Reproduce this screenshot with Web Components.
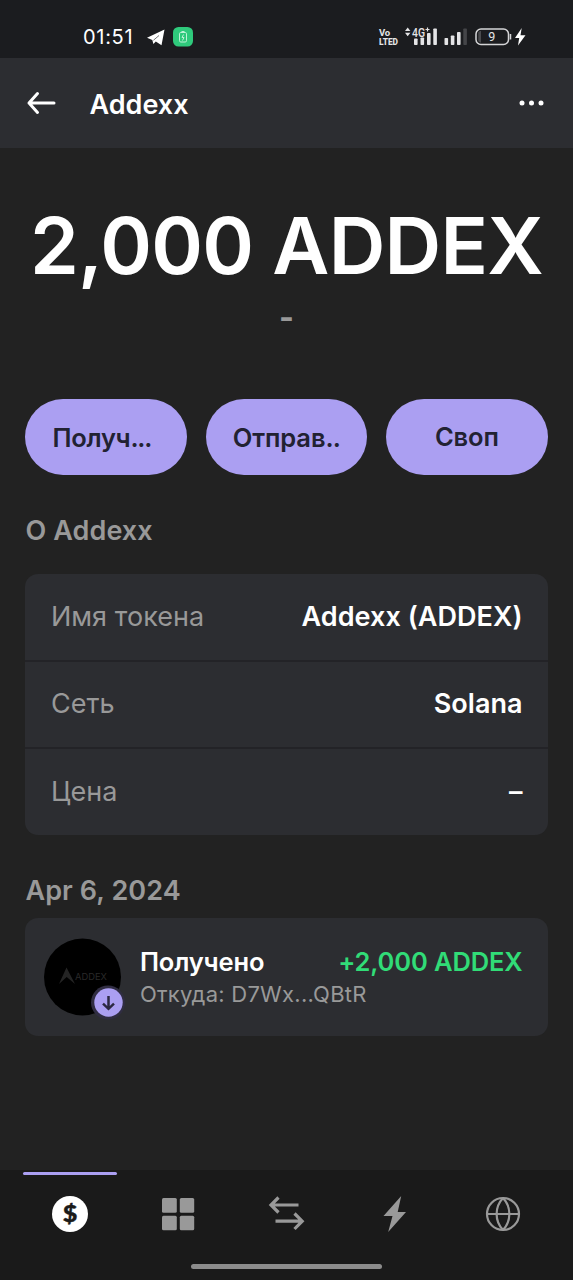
<!DOCTYPE html>
<html lang="ru"><head><meta charset="utf-8"><title>Addexx</title>
<style>
body{margin:0;background:#222;font-family:Inter,"Noto Sans",sans-serif;color:#fff}
</style></head><body>
<wallet-app></wallet-app>
<script>
const define=(name,html)=>{
  const t=document.createElement('template');t.innerHTML=html;
  customElements.define(name,class extends HTMLElement{
    constructor(){super();this.attachShadow({mode:'open'}).append(t.content.cloneNode(true));}
  });
};

define('status-bar',`<style>
:host{display:flex;height:58px;background:#1b1c1f;box-sizing:border-box;padding:15px 45px 0 83px;align-items:center}
.time{font:400 20px/24px Inter,sans-serif;letter-spacing:.7px;width:64px;white-space:nowrap}
svg{display:block}.right{margin-left:auto}
text{font-family:Roboto,sans-serif;fill:#e4e4e6}
</style>
<span class="time">01:51</span>
<svg width="48" height="24" viewBox="147 25 48 24"><path d="M147 37.800L164.500 29.500L161.500 45.200L155.800 41.500L153.400 44L152.300 39.900Z" fill="#fff"/><path d="M153.400 40.300L159 35.500" fill="none" stroke="#1b1c1f" stroke-width=".6"/>
<rect x="173" y="27" width="20" height="19.500" rx="5.500" fill="#2fca7c"/><rect x="179.500" y="32.500" width="7" height="9.500" rx="1.300" fill="none" stroke="#bdf2d6"/><path d="M181.500 31.500h3M183.500 34.500l-1.500 3h2l-1.500 3" fill="none" stroke="#bdf2d6" stroke-width="1"/></svg>
<svg class="right" width="150" height="24" viewBox="378 25 150 24">
<text x="379" y="36" font-size="9.500" font-weight="700" textLength="11">Vo</text><text x="379" y="44.700" font-size="8.800" font-weight="800" textLength="19" lengthAdjust="spacingAndGlyphs">LTED</text>
<path d="M405 31l2.700-3.500 2.700 3.500zM405 32.700l2.700 3.500 2.700-3.500z" fill="#e4e4e6"/>
<g fill="#e4e4e6"><rect x="414" y="38.500" width="3.600" height="6.500" rx=".8"/><rect x="420.500" y="37.500" width="3.600" height="7.500" rx=".8"/><rect x="427" y="33" width="3.600" height="12" rx=".8"/><rect x="433.300" y="28.500" width="3.600" height="16.500" rx=".8"/>
<rect x="444.500" y="38" width="3.600" height="7" rx=".8"/><rect x="450.800" y="35.500" width="3.600" height="9.500" rx=".8"/><rect x="457" y="32" width="3.600" height="13" rx=".8"/><rect x="463.300" y="28.500" width="3.600" height="16.500" rx=".8" fill="#444548"/></g>
<text x="412" y="36.500" font-size="12" font-weight="500" textLength="13" lengthAdjust="spacingAndGlyphs">4G</text><path d="M425.500 29.500h4M427.500 27.500v4" stroke="#e4e4e6" stroke-width="1.200"/>
<rect x="476" y="29" width="32.500" height="15.500" rx="5" fill="none" stroke="#d5d5d7" stroke-width="1.500"/><path d="M478.300 32.500q.3-1.300 2.700-1.700v12q-2.400-.4-2.700-1.700z" fill="#4a4b4e"/><path d="M510.500 34v5.500" stroke="#d5d5d7" stroke-width="1.500"/>
<text x="488.300" y="41.300" font-size="12.500">9</text>
<path d="M521.700 28L515 38h4.200L518 45.500L525.500 35.300H520.500Z" fill="#fff"/></svg>`);

define('app-header',`<style>
:host{display:flex;align-items:center;height:90px;background:#2c2d31;box-sizing:border-box;padding:0 28px 0 26px}
.t{font-size:27px;line-height:32px;font-weight:600;margin-left:32.500px;padding-top:3px;flex:1}svg{display:block}
</style>
<svg width="31" height="24" viewBox="0 0 31 24"><path d="M11.500 2.500L3 12L11.500 21.500M3 12H28" fill="none" stroke="#fff" stroke-width="3" stroke-linecap="round" stroke-linejoin="round"/></svg>
<span class="t"><slot></slot></span>
<svg width="28" height="8" viewBox="0 0 28 8"><g fill="#fff"><circle cx="5" cy="4" r="2.500"/><circle cx="14.500" cy="4" r="2.500"/><circle cx="24" cy="4" r="2.500"/></g></svg>`);

define('token-balance',`<style>
:host{display:flex;flex-direction:column;align-items:center;height:251px;box-sizing:border-box;padding-top:50px}
.n{font-size:78.5px;line-height:95px;font-weight:600;letter-spacing:-.75px;white-space:nowrap}
.s{font-size:32px;line-height:32px;font-weight:700;color:#999;margin-top:9px}
</style><div class="n"><slot></slot></div><div class="s"><slot name="fiat"></slot></div>`);

define('pill-button',`<style>
:host{display:flex;min-width:0;height:76px;border-radius:38px;background:#ab9ff2;color:#222232;align-items:center;justify-content:center;font-size:25.5px;font-weight:600;letter-spacing:var(--track,-.1px);white-space:nowrap;box-sizing:border-box;padding-right:var(--shift,0);padding-bottom:var(--lift,0)}
</style><slot></slot>`);

define('section-title',`<style>:host{display:block;font-size:27px;line-height:32px;font-weight:600;color:#999;letter-spacing:.1px}</style><slot></slot>`);

define('info-row',`<style>
:host{display:flex;height:87.5px;box-sizing:border-box;padding:0 25px 1px 25.500px;align-items:center;justify-content:space-between;border-bottom:2px solid #232327;font-size:27px}
:host(:last-child){border-bottom:0;height:86px;padding-bottom:2px}
.l{color:#999;letter-spacing:.05px}.v{font-weight:600;letter-spacing:.05px}
</style><span class="l"><slot name="label"></slot></span><span class="v"><slot></slot></span>`);

define('info-card',`<style>:host{display:block;background:#2c2d31;border-radius:13px;overflow:hidden}</style><slot></slot>`);

define('token-avatar',`<style>:host{display:block;width:81px;height:84px}svg{display:block}</style>
<svg width="81" height="84" viewBox="44 937 81 84"><circle cx="82.500" cy="977" r="38.500" fill="#000"/>
<path d="M59 984L66.500 967.500L75 984L66.700 977Z" fill="#242424"/><text x="75" y="980" font-family="Inter,sans-serif" font-size="9.500" textLength="32" lengthAdjust="spacingAndGlyphs" fill="#292929">ADDEX</text>
<circle cx="108" cy="1002.500" r="17" fill="#302d42"/><circle cx="108.500" cy="1002.500" r="14.200" fill="#ab9ff2"/><path d="M108.500 996v12.500M103 1003.700l5.500 5.100 5.500-5.100" fill="none" stroke="#2c2942" stroke-width="2.500"/></svg>`);

define('activity-item',`<style>
:host{display:flex;height:118px;background:#2c2d31;border-radius:13px;box-sizing:border-box;padding:19px 25px 0 18.500px}
.b{flex:1;padding:9px 0 0 15px}
.r{display:flex;justify-content:space-between;font-size:25.5px;line-height:32px;font-weight:600;letter-spacing:-.12px}.a{color:#31dc77}
.f{font-size:22px;line-height:28px;color:#999;margin-top:2px;letter-spacing:.25px}
</style><token-avatar></token-avatar><div class="b"><div class="r"><span class="k"><slot></slot></span><span class="a"><slot name="amount"></slot></span></div><div class="f"><slot name="from"></slot></div></div>`);

define('tab-bar',`<style>
:host{display:block;height:110px;background:#1a1a1a;margin-top:auto}
.tabs{display:flex;padding:0 16px;height:94px}
.tab{flex:1;display:flex;flex-direction:column;align-items:center}
.line{width:94px;height:3px;border-radius:2px;margin-top:2px}.on{background:#ab9ff2}
svg{display:block;margin-top:19px}.home{width:191px;height:5px;border-radius:3px;background:#8c8c8c;margin:0 auto}
text{font:900 22.500px Lato,sans-serif}
</style><div class="tabs">
<div class="tab"><div class="line on"></div><svg width="40" height="40" viewBox="0 0 40 40"><circle cx="20" cy="20" r="18" fill="#fff"/><text x="12.700" y="28.100" textLength="14.600" lengthAdjust="spacingAndGlyphs" fill="#1a1a1a" stroke="#1a1a1a" stroke-width=".4">$</text></svg></div>
<div class="tab"><div class="line"></div><svg width="40" height="40" viewBox="0 0 40 40" fill="#999"><rect x="4" y="4" width="14.800" height="14.800" rx="1.500"/><rect x="21.800" y="4" width="14.400" height="14.800" rx="1.500"/><rect x="4" y="21.800" width="14.800" height="14.400" rx="1.500"/><rect x="21.800" y="21.800" width="14.400" height="14.400" rx="1.500"/></svg></div>
<div class="tab"><div class="line"></div><svg width="40" height="40" viewBox="0 0 40 40"><path d="M11.500 3.500L4 11L11.500 18.500M4 11H31.500M8.500 27.200H35M27.500 19.500L35.200 27.200L27.500 35" fill="none" stroke="#999" stroke-width="3.200"/></svg></div>
<div class="tab"><div class="line"></div><svg width="40" height="40" viewBox="0 0 40 40"><path d="M26.200 2L8.500 22H17.500L13.200 38L31 18H22.700Z" fill="#999"/></svg></div>
<div class="tab"><div class="line"></div><svg width="40" height="40" viewBox="0 0 40 40" fill="none" stroke="#999" stroke-width="2.200"><circle cx="20" cy="20" r="16"/><path d="M4 20H36M20 4C11.500 13 11.500 27 20 36M20 4C28.500 13 28.500 27 20 36"/></svg></div>
</div><div class="home"></div>`);

define('wallet-app',`<style>
:host{display:flex;flex-direction:column;height:1280px;width:573px;overflow:hidden}
main{padding:0 25.400px}.actions{display:grid;grid-template-columns:repeat(3,minmax(0,1fr));gap:19px}
.about{margin:40px 0 27px}.date{margin:40px 0 11px}
.dots{letter-spacing:-1.2px}.dots2{letter-spacing:-.7px}
</style><status-bar></status-bar><app-header>Addexx</app-header>
<token-balance>2,000 ADDEX<span slot="fiat">-</span></token-balance>
<main><div class="actions"><pill-button style="--track:-.25px;--shift:8.500px"><span>Получ<span class="dots">...</span></span></pill-button><pill-button><span>Отправ<span class="dots2">..</span></span></pill-button><pill-button style="--lift:2px">Своп</pill-button></div>
<section-title class="about">О Addexx</section-title>
<info-card><info-row><span slot="label">Имя токена</span>Addexx (ADDEX)</info-row><info-row><span slot="label">Сеть</span>Solana</info-row><info-row><span slot="label">Цена</span>–</info-row></info-card>
<section-title class="date">Apr 6, 2024</section-title>
<activity-item>Получено<span slot="amount">+2,000 ADDEX</span><span slot="from">Откуда: D7Wx...QBtR</span></activity-item></main>
<tab-bar></tab-bar>`);
</script></body></html>
